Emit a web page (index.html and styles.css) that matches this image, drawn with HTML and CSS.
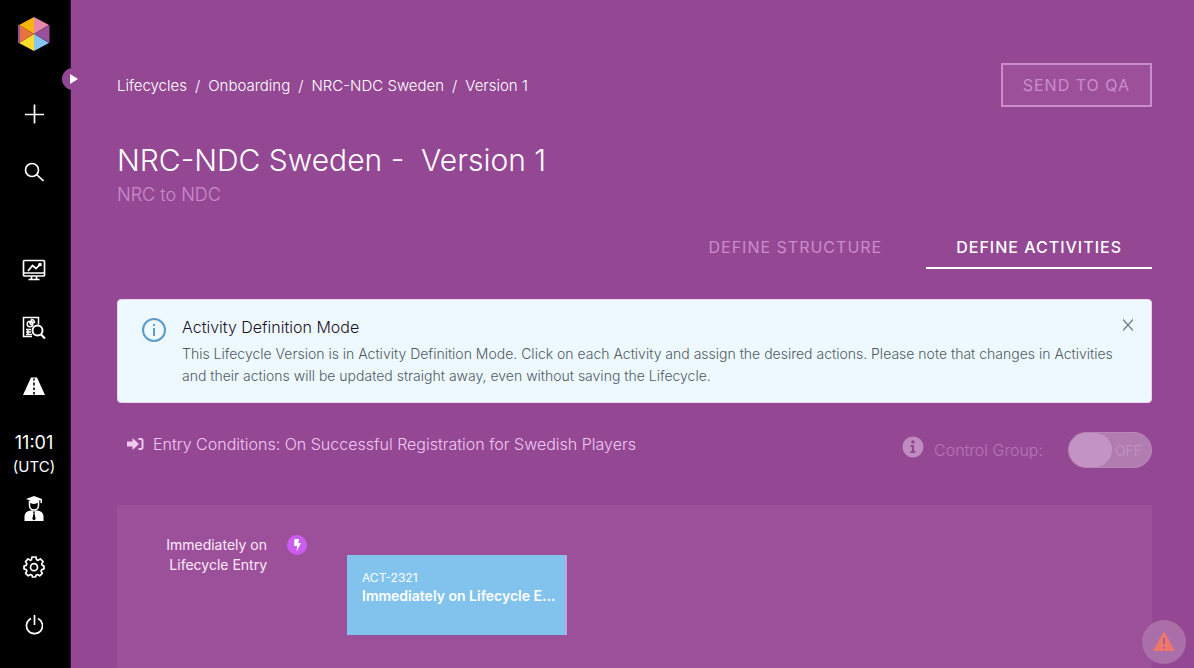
FILE: index.html
```html
<!DOCTYPE html>
<html lang="en">
<head>
<meta charset="UTF-8">
<title>NRC-NDC Sweden - Version 1</title>
<meta name="viewport" content="width=device-width,initial-scale=1">
<link rel="stylesheet" href="styles.css">
</head>
<body>

<nav class="sidebar" aria-label="Main">
  <a class="logo" href="#" aria-label="Home">
    <svg width="34" height="36" viewBox="0 0 34 36">
      <path d="M17 18V1L2 9z" fill="#f7b50c"/>
      <path d="M17 18V1l15 8z" fill="#e586aa"/>
      <path d="M17 18L32.500 9v18z" fill="#98509a"/>
      <path d="M17 18l15 9-15 8z" fill="#86c5f0"/>
      <path d="M17 18v17L2 27z" fill="#fddc2c"/>
      <path d="M17 18L2 27V9z" fill="#e6743c"/>
      <path d="M2 9v18" stroke="#98509a" stroke-width="2"/>
    </svg>
  </a>
  <button class="expand" type="button" aria-label="Expand menu">
    <svg width="8" height="10" viewBox="0 0 8 10"><path d="M0 0l8 5-8 5z" fill="#fff"/></svg>
  </button>

  <div class="nav-group">
    <a href="#" aria-label="Add">
      <svg width="20" height="20" viewBox="0 0 20 20" class="line"><path d="M10.500 .5v19M1 10.500h19"/></svg>
    </a>
    <a href="#" aria-label="Search">
      <svg width="20" height="20" viewBox="0 0 20 20" class="line"><circle cx="8" cy="8" r="6.500"/><path d="M12.500 12.500l7 6.500"/></svg>
    </a>
  </div>

  <div class="nav-group">
    <a href="#" aria-label="Dashboard">
      <svg width="24" height="22" viewBox="0 0 24 22" class="line">
        <rect x="1.500" y="1.500" width="21" height="15.500" rx="1"/>
        <path d="M1.500 14h21M9.500 17v3M14.500 17v3M6.500 20.500h11M6 12l4.500-5.500 3.500 3L18 5.500"/>
        <circle cx="18" cy="5.500" r="1" fill="#fff"/>
      </svg>
    </a>
    <a href="#" aria-label="Reports">
      <svg width="24" height="24" viewBox="0 0 24 24" class="line thin">
        <path d="M10 20.500H1.500v-19h15v7"/>
        <circle cx="8" cy="8" r="2.800"/>
        <path d="M8 8V5M8 8l3 1M9.500 6.500V3.500a3 3 0 0 1 3 3z"/>
        <path d="M4 13.500h5M4 16h5M4 18.500h6M6 13v6"/>
        <circle cx="15.500" cy="14.500" r="5" class="lens"/>
        <path d="M19 18.500l4 4" stroke-width="2.200"/>
      </svg>
    </a>
    <a href="#" aria-label="Journeys">
      <svg width="22" height="18" viewBox="0 0 22 18">
        <path d="M8 .5h6l8 17.500H0z" fill="#fff"/>
        <path d="M11 1.500v2M11 5.500v3M11 10.500v2.500M11 15v2.500" stroke="#000" stroke-width="1.600"/>
      </svg>
    </a>
    <div class="clock"><time>11:01</time><small>(UTC)</small></div>
    <a href="#" aria-label="Academy">
      <svg width="20" height="26" viewBox="0 0 20 26">
        <path d="M10 0l8 3v4h-1.500V4.200L10 6 2 3z" fill="#fff"/>
        <path d="M5.500 5v4.500a4.500 4.500 0 0 0 9 0V5" fill="none" stroke="#fff" stroke-width="1.500"/>
        <path d="M5.500 6.500C8 8.500 12 8.500 14.500 6V4.500h-9z" fill="#fff"/>
        <path d="M6.500 14.500h7c4 .5 6 2.500 6 6V25H.5v-4.500c0-3.500 2-5.500 6-6z" fill="#fff"/>
        <path d="M9 15.500h2l-.5 2 1.200 5.500L10 24.500 8.300 23l1.200-5.500z" fill="#000"/>
      </svg>
    </a>
    <a href="#" aria-label="Settings">
      <svg width="22" height="22" viewBox="0 0 22 22" class="line">
        <path d="M9 1h4l.6 2.700 1.500.7 2.300-1.500 2.700 2.700-1.500 2.300.7 1.500L21 10v3l-2.300.6-.7 1.500 1.300 2.200-2.600 2.500-2.200-1.300-1.500.7L12.500 21h-3L9 19.200l-1.500-.7-2.300 1.300-2.600-2.500 1.300-2.200-.7-1.500L1 13v-3l2.200-.6.7-1.500-1.400-2.300 2.600-2.700 2.300 1.500L8.400 3.700z" stroke-linejoin="round"/>
        <circle cx="11" cy="11.200" r="3.500"/>
      </svg>
    </a>
    <a href="#" aria-label="Log out">
      <svg width="18" height="20" viewBox="0 0 18 20" class="line"><path d="M9.500 0v10M6 3.500a8 8 0 1 0 7 0"/></svg>
    </a>
  </div>
</nav>

<main class="page">
  <header class="topbar">
    <nav class="breadcrumb" aria-label="Breadcrumb">
      <a href="#">Lifecycles</a><span>/</span>
      <a href="#">Onboarding</a><span>/</span>
      <a href="#">NRC-NDC Sweden</a><span>/</span>
      <a href="#">Version 1</a>
    </nav>
    <button class="btn-qa" type="button">SEND TO QA</button>
  </header>

  <h1>NRC-NDC Sweden -&nbsp; Version 1</h1>
  <p class="subtitle">NRC to NDC</p>

  <div class="tabs" role="tablist">
    <button class="tab" type="button" role="tab" aria-selected="false">DEFINE STRUCTURE</button>
    <button class="tab active" type="button" role="tab" aria-selected="true">DEFINE ACTIVITIES</button>
  </div>

  <section class="alert">
    <svg class="alert-icon" width="24" height="24" viewBox="0 0 24 24">
      <circle cx="12" cy="12" r="11" fill="none" stroke="#5b9bc9" stroke-width="2"/>
      <path d="M12 10v8M12 6v2" stroke="#5b9bc9" stroke-width="2"/>
    </svg>
    <div class="alert-body">
      <h2>Activity Definition Mode</h2>
      <p>This Lifecycle Version is in Activity Definition Mode. Click on each Activity and assign the desired actions. Please note that changes in Activities and their actions will be updated straight away, even without saving the Lifecycle.</p>
    </div>
    <button class="close" type="button" aria-label="Close">
      <svg width="10" height="12" viewBox="0 0 10 12"><path d="M0 .5l10 11M10 .5l-10 11" stroke="#707a82" stroke-width="1.200"/></svg>
    </button>
  </section>

  <div class="conditions">
    <div class="entry">
      <svg width="17" height="14" viewBox="0 0 17 14">
        <path d="M0 4.500h5.500V1L12 7l-6.500 6V9.500H0z" fill="#f0c8f0"/>
        <path d="M11.500 2H14a1.500 1.500 0 0 1 1.500 1.500v7A1.500 1.500 0 0 1 14 12h-2.500" fill="none" stroke="#f0c8f0" stroke-width="2"/>
      </svg>
      <span>Entry Conditions: On Successful Registration for Swedish Players</span>
    </div>
    <div class="control">
      <svg width="22" height="22" viewBox="0 0 22 22">
        <circle cx="11" cy="11" r="10.500" fill="#c08bc0"/>
        <circle cx="11" cy="6" r="1.800" fill="#944894"/>
        <path d="M8.500 9H12v6h1.500v2h-5v-2H10v-4H8.500z" fill="#944894"/>
      </svg>
      <label for="controlGroup">Control Group:</label>
      <span class="switch">
        <input type="checkbox" id="controlGroup" role="switch" disabled>
        <span class="switch-text">OFF</span>
      </span>
    </div>
  </div>

  <section class="board">
    <div class="stage">
      <span>Immediately on Lifecycle Entry</span>
      <svg width="20" height="20" viewBox="0 0 20 20">
        <circle cx="10" cy="10" r="10" fill="#cb5cf0"/>
        <path d="M7.500 4h4.700l-1 4H14l-4.500 8.500.7-5.500H7z" fill="#fff"/>
      </svg>
    </div>
    <a class="activity" href="#">
      <span class="activity-id">ACT-2321</span>
      <strong>Immediately on Lifecycle E...</strong>
    </a>
  </section>
</main>

<button class="warning" type="button" aria-label="Warnings">
  <svg width="24" height="22" viewBox="0 0 24 22">
    <path d="M12 0l11 20H1z" fill="#ed776c"/>
    <path d="M12 7v6M12 15.500v2" stroke="#a8608c" stroke-width="2"/>
  </svg>
</button>

</body>
</html>
```
FILE: styles.css
```css
* {
  box-sizing: border-box;
}
body {
  margin: 0;
  display: flex;
  height: 100vh;
  overflow: hidden;
  background: #944894;
  color: #fff;
  font-family: Inter, "Liberation Sans", sans-serif;
}
a {
  color: inherit;
  text-decoration: none;
}
button {
  font: inherit;
  border: 0;
  padding: 0;
  background: none;
  color: inherit;
  cursor: pointer;
}
h1, h2, p {
  margin: 0;
}
svg {
  display: block;
  flex: none;
}

/* sidebar */
.sidebar {
  position: relative;
  flex: none;
  display: flex;
  flex-direction: column;
  width: 71px;
  padding: 16px 2px 14px 0;
  background: #000;
  border-right: 1px solid #35083a;
}
.logo {
  display: flex;
  justify-content: center;
  margin-bottom: 33px;
}
.expand {
  position: absolute;
  top: 68px;
  left: 62px;
  display: flex;
  align-items: center;
  width: 22px;
  height: 22px;
  padding-left: 8px;
  border-radius: 50%;
  background: #944894;
}
.nav-group {
  display: flex;
  flex-direction: column;
}
.nav-group:last-child {
  margin-top: auto;
}
.nav-group a {
  display: flex;
  align-items: center;
  justify-content: center;
  height: 58px;
}
.line {
  fill: none;
  stroke: #fff;
  stroke-width: 1.7;
}
.thin {
  stroke-width: 1.5;
}
.lens {
  fill: #000;
  stroke-width: 2;
}
.clock {
  display: flex;
  flex-direction: column;
  align-items: center;
  height: 65px;
  padding-top: 16px;
  font-size: 18px;
  line-height: 24px;
}
.clock small {
  font-size: 15px;
}

/* page */
.page {
  flex: 1;
  min-width: 0;
  display: flex;
  flex-direction: column;
  padding: 63px 42px 0 46px;
}
.topbar {
  display: flex;
  align-items: center;
  justify-content: space-between;
}
.breadcrumb {
  display: flex;
  gap: 8px;
  font-size: 15px;
  font-weight: 300;
  color: #fff;
}
.btn-qa {
  height: 44px;
  padding: 0 20px;
  border: 2px solid #cb8ccb;
  background: #9c5099;
  color: #cb8ccb;
  font-size: 16px;
  letter-spacing: 1px;
}
h1 {
  margin-top: 33px;
  font-size: 30px;
  font-weight: 300;
  line-height: 40px;
}
.subtitle {
  margin-top: 3px;
  font-size: 18px;
  font-weight: 300;
  line-height: 24px;
  color: #cb8ccb;
}
.tabs {
  display: flex;
  justify-content: flex-end;
  gap: 14px;
  margin-top: 20px;
}
.tab {
  height: 42px;
  padding: 0 30px;
  border-bottom: 2px solid transparent;
  color: #cb8ccb;
  font-size: 16px;
  letter-spacing: 1px;
}
.tab.active {
  border-color: #fff;
  color: #fff;
  font-weight: 500;
}

/* alert */
.alert {
  display: flex;
  align-items: flex-start;
  margin-top: 30px;
  padding: 15px 18px 15px 24px;
  border: 1px solid #e6d4f5;
  border-radius: 4px;
  background: #edf9fe;
}
.alert-icon {
  margin-top: 3px;
}
.alert-body {
  flex: 1;
  padding-left: 16px;
}
.alert h2 {
  color: #1d1028;
  font-size: 16px;
  font-weight: 300;
  line-height: 24px;
}
.alert p {
  margin-top: 4px;
  color: #505a64;
  font-size: 14px;
  font-weight: 300;
  line-height: 22px;
}
.close {
  margin-top: 4px;
}

/* conditions */
.conditions {
  display: flex;
  justify-content: space-between;
  margin-top: 29px;
}
.entry {
  display: flex;
  align-items: center;
  gap: 9px;
  height: 24px;
  padding-left: 10px;
  font-size: 16px;
  font-weight: 300;
  color: #f0c8f0;
}
.control {
  display: flex;
  align-items: center;
  gap: 10px;
  font-size: 16px;
  font-weight: 300;
  color: #b676b4;
}
.control svg {
  margin-bottom: 6px;
}
.switch {
  display: grid;
  align-items: center;
  margin-left: 15px;
}
.switch input, .switch-text {
  grid-area: 1 / 1;
}
.switch input {
  appearance: none;
  width: 84px;
  height: 36px;
  margin: 0;
  border: 1px solid #ba85b9;
  border-radius: 18px;
  background: #b17db0;
}
.switch input::before {
  content: "";
  display: block;
  width: 43px;
  height: 34px;
  border-radius: 17px;
  background: #c394c3;
}
.switch-text {
  justify-self: end;
  padding-right: 10px;
  font-size: 14px;
  color: #c394c3;
}

/* board */
.board {
  flex: 1;
  display: flex;
  align-items: flex-start;
  margin-top: 37px;
  padding: 30px 49px 0;
  border-radius: 2px;
  background: #9c5099;
}
.stage {
  display: flex;
  align-items: flex-start;
  gap: 20px;
  width: 181px;
  font-size: 14px;
  line-height: 20px;
  text-align: right;
  color: #fdeafd;
}
.stage span {
  width: 101px;
}
.activity {
  display: flex;
  flex-direction: column;
  width: 220px;
  height: 80px;
  margin-top: 20px;
  padding: 14px 4px 0 15px;
  border-right: 2px solid #b9a9e0;
  background: #82c3ee;
  font-size: 14px;
  line-height: 18px;
}
.activity-id {
  font-size: 12px;
}
.activity strong {
  font-weight: 600;
  white-space: nowrap;
}

.warning {
  position: fixed;
  right: 8px;
  bottom: 4px;
  display: flex;
  align-items: center;
  justify-content: center;
  width: 44px;
  height: 44px;
  border-radius: 50%;
  background: #aa6fa8;
}
```
